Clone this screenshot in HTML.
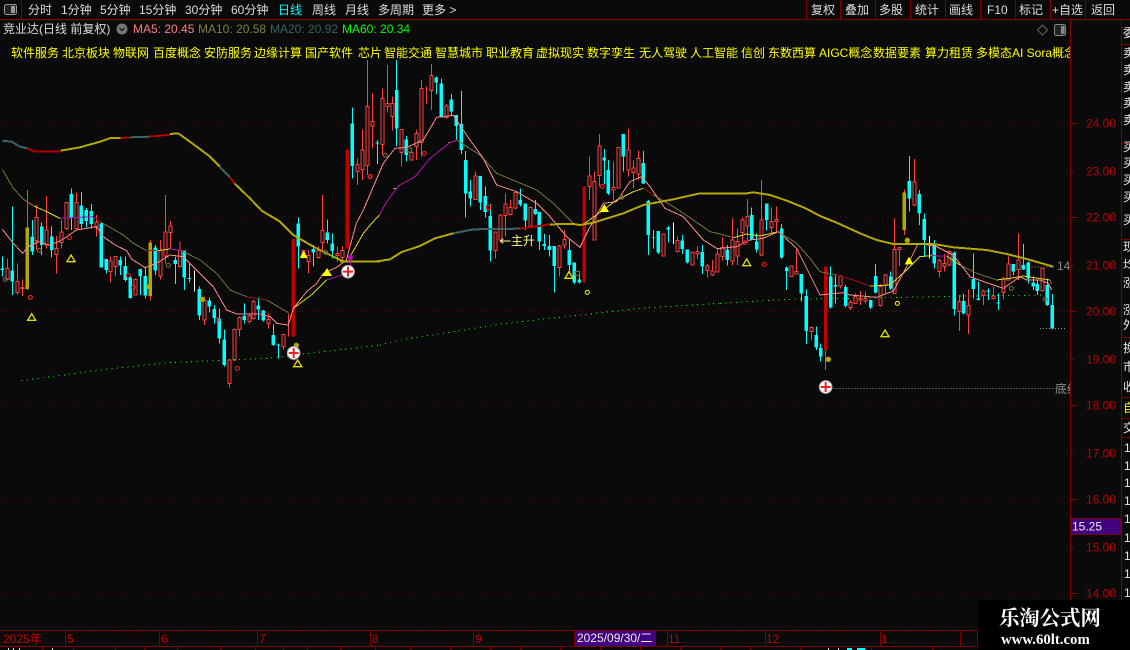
<!DOCTYPE html>
<html><head><meta charset="utf-8"><style>
html,body{margin:0;padding:0;background:#0a0a0a;overflow:hidden}
svg{display:block}
text{font-family:"Liberation Sans","WenQuanYi Zen Hei","Noto Sans CJK SC",sans-serif;font-size:12px}
.w{fill:#ddd}.t{fill:#ff0;font-size:12px}.a{fill:#c00000;font-size:12px}.s{fill:#e8e8e8;font-size:12px}.d{fill:#c00000;font-size:12px}
.rw{fill:none;stroke:#ff4040;stroke-width:3}.rb{fill:#0a0a0a;stroke:#ff4040;stroke-width:3}
.cw{fill:none;stroke:#0ff;stroke-width:3}.cb{fill:none;stroke:#0ff;stroke-width:10}
.m5{fill:none;stroke:#ff8a8a;stroke-width:3}.m10{fill:none;stroke:#77753c;stroke-width:3}.my{fill:none;stroke:#d8d820;stroke-width:3}.mm{fill:none;stroke:#b010b0;stroke-width:3}.mr{fill:none;stroke:#a01010;stroke-width:3}
.g{fill:none;stroke:#b3a800;stroke-width:6}.gt{fill:none;stroke:#3a6468;stroke-width:6}.gr{fill:none;stroke:#b00000;stroke-width:6}
.dots{fill:none;stroke:#0f0;stroke-width:3;stroke-dasharray:3 13}
.tk{stroke:#c00000;stroke-width:11;fill:none}.gd{stroke:#b3a800;stroke-width:11;fill:none}
.hr{fill:none;stroke:#ff2020;stroke-width:3}.ho{fill:none;stroke:#77753c;stroke-width:3}.hy{fill:none;stroke:#ff0;stroke-width:3}
.tri{fill:none;stroke:#e0e000;stroke-width:4}.trf{fill:#ff0}.dot{fill:#b3a800}
.pb{fill:#fff;stroke:#aaa;stroke-width:3}.pl{stroke:#f02020;stroke-width:6;fill:none}
.gl{stroke:#5e1010;stroke-width:1;stroke-dasharray:1 5;fill:none}
.ln{stroke:#800000;stroke-width:1;fill:none}
</style></head><body>
<svg width="1130" height="650" viewBox="0 0 1130 650" xmlns="http://www.w3.org/2000/svg">
<rect width="1130" height="650" fill="#0a0a0a"/>
<g shape-rendering="crispEdges">
<path class="gl" d="M0 123.5H1070M0 217.5H1070M0 311.5H1070M0 405.5H1070M0 499.5H1070M0 593.5H1070"/>
<path class="ln" d="M0 19.5H1130M1070.5 19V630M1121.5 20V600M21.5 0V19M806.5 0V19M840.5 0V19M875.5 0V19M910.5 0V19M945.500 0V19M980.5 0V19M1015.5 0V19M1050.5 0V19M1085.5 0V19"/>
<path class="ln" d="M0 630.5H1070M0 646.5H978M65.5 630V646M159.5 630V646M257.5 630V646M370.5 630V646M473.5 630V646M574.5 630V646M655.5 630V646M667.5 630V646M765.5 630V646M880.5 630V646"/>
<path class="ln" d="M89.5 630V633M112.5 630V633M136.5 630V633M183.5 630V633M210.5 630V633M234.5 630V633M277.5 630V633M300.5 630V633M323.5 630V633M396.5 630V633M421.5 630V633M446.5 630V633M498.5 630V633M528.5 630V633M554.5 630V633M692.5 630V633M715.5 630V633M741.5 630V633M792.5 630V633M817.5 630V633M842.5 630V633M905.5 630V633M930.5 630V633M955.5 630V633"/>
<path class="ln" d="M42.5 646V650M73.5 646V650M115.5 646V650M144.5 646V650M177.5 646V650M220.5 646V650M255.5 646V650M283.5 646V650M307.5 646V650M340.5 646V650M375.5 646V650M410.5 646V650M450.5 646V650M490.5 646V650M520.5 646V650M560.5 646V650M600.5 646V650M640.5 646V650M680.5 646V650M720.5 646V650M750.5 646V650M800.5 646V650M871.5 646V650M932.5 646V650"/>
<path class="ln" d="M1070 123.5H1077M1070 171.5H1074M1070 217.5H1077M1070 265.5H1074M1070 311.5H1077M1070 359.5H1074M1070 405.5H1077M1070 453.5H1074M1070 499.5H1077M1070 547.5H1074M1070 593.5H1077"/>
<path class="ln" d="M1121 27.5H1130M1121 44.5H1130M1121 143.5H1130M1121 239.5H1130M1121 337.5H1130M1121 397.5H1130M1121 418.5H1130M1121 437.5H1130"/>
<path d="M8 648h1v2h-1zM13 648h1v2h-1zM19 648h1v2h-1zM52 648h1v2h-1zM828 648h1v2h-1zM838 648h1v2h-1z" fill="#ddd"/>
<path d="M847 648h5v2h-5zM857 648h8v2h-8z" fill="#0ff"/>
</g>
<rect x="4.5" y="4.5" width="12" height="10" rx="2" fill="#222" stroke="#999" stroke-width="1"/><rect x="11" y="6" width="4" height="7" fill="#999"/>
<g>
<text x="28" y="14" class="w">分时</text><text x="61" y="14" class="w">1分钟</text><text x="100" y="14" class="w">5分钟</text><text x="139" y="14" class="w">15分钟</text><text x="185" y="14" class="w">30分钟</text><text x="231" y="14" class="w">60分钟</text><text x="278" y="14" fill="#0ff">日线</text><text x="312" y="14" class="w">周线</text><text x="345" y="14" class="w">月线</text><text x="378" y="14" class="w">多周期</text><text x="422" y="14" class="w">更多 &gt;</text>
<text x="811" y="14" class="w">复权</text><text x="845" y="14" class="w">叠加</text><text x="879" y="14" class="w">多股</text><text x="915" y="14" class="w">统计</text><text x="949" y="14" class="w">画线</text><text x="987" y="14" class="w">F10</text><text x="1019" y="14" class="w">标记</text><text x="1052" y="14" class="w">+自选</text><text x="1091" y="14" class="w">返回</text>
<text x="3" y="33" class="w">竞业达(日线 前复权)</text>
<circle cx="122" cy="29" r="5.5" fill="#777"/><path d="M119.5 28l2.5 2.5 2.5-2.5" fill="none" stroke="#111" stroke-width="1.2"/>
<text x="133" y="33" fill="#ff8080">MA5: 20.45</text><text x="198" y="33" fill="#808040">MA10: 20.58</text><text x="270" y="33" fill="#346468">MA20: 20.92</text><text x="342" y="33" fill="#0f0">MA60: 20.34</text>
<path d="M1042.5 25l5 5-5 5-5-5z" fill="none" stroke="#666"/><rect x="1054.5" y="24.5" width="11" height="11" rx="2" fill="#222" stroke="#888"/><rect x="1061" y="26" width="3.5" height="8" fill="#888"/>
<text x="11" y="57" class="t">软件服务</text><text x="62" y="57" class="t">北京板块</text><text x="113" y="57" class="t">物联网</text><text x="153" y="57" class="t">百度概念</text><text x="204" y="57" class="t">安防服务</text><text x="254" y="57" class="t">边缘计算</text><text x="305" y="57" class="t">国产软件</text><text x="358" y="57" class="t">芯片</text><text x="384" y="57" class="t">智能交通</text><text x="435" y="57" class="t">智慧城市</text><text x="486" y="57" class="t">职业教育</text><text x="536" y="57" class="t">虚拟现实</text><text x="587" y="57" class="t">数字孪生</text><text x="639" y="57" class="t">无人驾驶</text><text x="690" y="57" class="t">人工智能</text><text x="741" y="57" class="t">信创</text><text x="768" y="57" class="t">东数西算</text><text x="819" y="57" class="t">AIGC概念</text><text x="873" y="57" class="t">数据要素</text><text x="925" y="57" class="t">算力租赁</text>
<svg x="0" y="40" width="1070" height="24"><text x="976" y="17" class="t">多模态AI Sora概念</text></svg>
</g>
<g shape-rendering="crispEdges">
<g transform="translate(0,60) scale(.33333)">
<path class="rw" d="M22 595V660M52 610V705M67 658V708M82 390V690M110 435V570M140 408V565M170 528V640M185 480V565M200 427V510M229 397V510M289 465V530M332 590V668M347 588V650M406 655V707M451 540V722M481 540V658M496 405V610M511 483V565M540 545V622M613 710V795M688 897V983M703 805V903M718 770V830M748 760V790M760 720V778M805 760V805M850 822V870M865 760V830M910 570V595M925 570V640M955 560V595M967 405V575M1012 560V605M1027 558V600M1072 295V375M1087 208V360M1102 0V345M1117 100V266"/>
<path class="rb" d="M22 625m-4.500 0h9V658h-9zM52 665m-4.500 0h9V698h-9zM67 682m-4.500 0h9V685h-9zM110 472m-4.500 0h9V542h-9zM140 510m-4.500 0h9V555h-9zM170 565m-4.500 0h9V583h-9zM185 516m-4.500 0h9V548h-9zM200 427m-4.500 0h9V505h-9zM229 427m-4.500 0h9V505h-9zM289 487m-4.500 0h9V500h-9zM332 603m-4.500 0h9V635h-9zM347 590m-4.500 0h9V620h-9zM406 658m-4.500 0h9V705h-9zM481 572m-4.500 0h9V648h-9zM496 516m-4.500 0h9V588h-9zM511 498m-4.500 0h9V518h-9zM540 572m-4.500 0h9V620h-9zM613 722m-4.500 0h9V780h-9zM688 900m-4.500 0h9V970h-9zM703 808m-4.500 0h9V900h-9zM718 772m-4.500 0h9V808h-9zM748 768m-4.500 0h9V785h-9zM760 724m-4.500 0h9V775h-9zM805 778m-4.500 0h9V790h-9zM850 823m-4.500 0h9V860h-9zM910 572m-4.500 0h9V590h-9zM925 587m-4.500 0h9V605h-9zM955 572m-4.500 0h9V593h-9zM967 512m-4.500 0h9V548h-9zM1012 580m-4.500 0h9V587h-9zM1027 572m-4.500 0h9V592h-9zM1072 313m-4.500 0h9V334h-9zM1087 270m-4.500 0h9V328h-9zM1102 140m-4.500 0h9V316h-9zM1117 184m-4.500 0h9V198h-9z"/>
<path class="cw" d="M7 590V650M37 440V705M97 480V585M125 487V585M155 500V593M214 385V510M244 396V505M259 444V503M274 432V505M304 487V623M319 597V640M361 590V645M376 590V665M391 650V716M421 627V705M436 620V715M466 555V645M526 590V672M553 572V690M568 612V668M598 680V780M628 712V758M643 735V790M658 745V850M673 808V920M733 730V790M775 712V780M790 750V785M820 793V858M835 850V895M895 472V625M940 555V620M982 478V550M997 520V595M1057 142V355M1132 240V312"/>
<path class="cb" d="M7 625V630M37 632V665M97 530V575M125 500V555M155 530V570M214 402V472M244 437V492M259 450V483M274 453V492M304 490V623M319 597V630M361 600V617M376 618V660M391 652V714M421 627V648M436 648V706M466 562V632M526 600V612M553 572V653M568 654V657M598 687V767M628 722V740M643 747V774M658 775V835M673 838V915M733 768V780M775 736V748M790 752V782M820 825V855M835 853V856M895 490V560M940 567V578M982 517V540M997 550V573M1057 190V318M1132 247V250"/>
<path d="M583 632V695" stroke="#fff" stroke-width="3" fill="none"/>
<path class="gd" d="M82 503V687M451 548V708"/><path class="tk" d="M880 537V830M1042 268V565"/>
<path class="m10" d="M7 328L40 385 75 422 100 435M300 485L370 525 400 550 440 572M545 572L600 600 650 640 690 690 740 710M800 720L865 758"/>
<path class="mr" d="M82 430L100 437M280 470L300 485M440 572L470 572M740 710L800 720"/>
<path class="my" d="M100 437L140 455 180 475M470 572L510 567M880 745L940 700 980 660"/>
<path class="mm" d="M180 475L280 470M510 567L545 572M980 660L1040 640"/>
<path class="m5" d="M7 508L40 550 68 580 85 560 115 545 150 556 185 540 230 510 290 500 310 530 345 555 380 572 395 597 435 623 470 610 510 585 550 590 590 630 640 680 680 750 710 762 780 762 810 770 830 790 865 795 880 745 920 695 950 670 970 640 1010 622 1040 600"/>
<path class="gt" d="M7 242L35 245 60 260 82 265M390 232L450 230"/>
<path class="gr" d="M82 265L105 275 182 275M362 234L390 232M450 230L510 224"/>
<path class="g" d="M182 272L240 262 300 245 332 234 362 234M510 222L535 220 590 260 630 290 660 320"/>
<path class="gt" d="M660 322L690 352"/><path class="gr" d="M690 352L703 370"/>
<path class="g" d="M703 370L750 415 785 452 840 485 880 525 940 560 1000 590 1030 604 1140 604"/>
<path class="dots" d="M65 962L300 930 500 908 800 895 1140 855"/>
</g>
<g transform="translate(340,60) scale(.33333)">
<path class="rw" d="M127 85V285M142 15V157M157 110V212M184 208V320M214 270V302M229 208V300M244 60V290M259 80V130M274 12V150M319 132V175M406 335V420M466 515V595M481 462V548M496 400V530M511 420V466M526 396V448M571 440V500M658 555V650M673 510V565M748 290V420M763 335V540M778 222V380M820 305V422M835 262V385M865 205V350M880 300V385M895 272V358M970 520V590M1012 530V577M1057 575V617M1072 560V597M1102 612V652M1117 600V648M1132 565V638"/>
<path class="rb" d="M127 115m-4.500 0h9V253h-9zM142 130m-4.500 0h9V140h-9zM157 130m-4.500 0h9V170h-9zM184 208m-4.500 0h9V278h-9zM214 278m-4.500 0h9V300h-9zM229 220m-4.500 0h9V260h-9zM244 85m-4.500 0h9V248h-9zM274 46m-4.500 0h9V92h-9zM319 138m-4.500 0h9V172h-9zM406 348m-4.500 0h9V418h-9zM466 516m-4.500 0h9V572h-9zM481 465m-4.500 0h9V540h-9zM496 432m-4.500 0h9V466h-9zM511 442m-4.500 0h9V464h-9zM526 398m-4.500 0h9V444h-9zM571 442m-4.500 0h9V498h-9zM658 558m-4.500 0h9V622h-9zM673 538m-4.500 0h9V555h-9zM748 348m-4.500 0h9V380h-9zM763 364m-4.500 0h9V540h-9zM778 258m-4.500 0h9V347h-9zM820 382m-4.500 0h9V390h-9zM835 262m-4.500 0h9V384h-9zM865 270m-4.500 0h9V330h-9zM880 324m-4.500 0h9V338h-9zM895 295m-4.500 0h9V342h-9zM970 522m-4.500 0h9V588h-9zM1012 541m-4.500 0h9V575h-9zM1057 578m-4.500 0h9V615h-9zM1072 574m-4.500 0h9V582h-9zM1102 618m-4.500 0h9V632h-9zM1117 633m-4.500 0h9V645h-9zM1132 582m-4.500 0h9V636h-9z"/>
<path class="cw" d="M170 0V258M199 228V305M289 50V102M304 55V173M334 102V168M349 165V240M364 93V282M377 273V472M391 360V440M421 348V450M436 380V472M451 432V605M541 385V440M556 430V510M586 420V465M598 455V570M613 522V570M628 525V590M643 558V698M688 538V640M703 608V672M718 640V670M793 267V372M805 300V405M850 222V335M910 273V372M925 420V585M940 510V565M955 513V582M985 498V548M1027 525V582M1042 568V610M1087 555V642"/>
<path class="cb" d="M170 90V205M199 238V285M289 52V68M304 70V172M334 118V155M349 165V198M364 192V270M377 300V400M391 395V416M421 348V428M436 408V456M451 468V572M541 420V433M556 430V482M586 447V462M598 456V545M613 552V558M628 558V570M643 558V618M688 570V615M703 608V668M718 658V668M793 292V302M805 330V400M850 222V290M910 309V370M925 423V525M940 532V534M955 513V578M985 503V508M1027 541V567M1042 568V608M1087 576V620"/>
<path d="M1000 487V552" stroke="#fff" stroke-width="3" fill="none"/>
<path class="tk" d="M733 380V668"/>
<path class="m10" d="M350 240L420 285 470 340 530 365 590 390 640 430 700 490M940 405L1000 440 1060 480 1110 515 1140 522"/>
<path class="my" d="M30 590L70 520 95 490 118 465M730 493L790 450 830 420 880 395 910 385M325 248L335 248M160 385L170 385"/>
<path class="mm" d="M118 465L140 425 175 378 225 350 270 295 330 248 350 240"/>
<path class="mr" d="M910 385L940 405"/>
<path class="m5" d="M19 600L49 490 70 450 100 380 130 310 165 265 200 262 250 240 290 172 340 166 390 240 430 295 470 375 530 395 590 430 630 470 680 530 720 562 745 510 790 430 830 425 870 365 905 350 930 380 975 445 1030 470 1090 540 1130 565 1145 567"/>
<path class="g" d="M0 605L112 604 150 598 185 576 240 558 285 535 340 520"/>
<path class="gt" d="M340 520L400 508 540 506"/><path class="gr" d="M540 506L630 493"/>
<path class="g" d="M630 493L700 492 720 495 760 488 850 460 910 435 1000 418 1075 401 1140 401"/>
<path class="dots" d="M120 855L180 840 500 790 900 745 1140 730"/>
</g>
<g transform="translate(720,130) scale(.33333)">
<path class="rw" d="M7 323V392M37 265V407M52 295V405M67 262V340M82 207V330M125 150V378M155 232V310M170 230V308M215 408V441M229 355V434M274 590V632M317 600V720M362 435V475M392 510V540M407 490V522M422 483V525M437 485V520M482 462V530M497 432V490M523 265V490M538 352V408M553 178V315M583 87V228M658 385V443M673 372V425M688 362V408M718 495V603M746 478V612M790 478V525M820 470V508M850 440V508M865 380V452M895 310V450M967 415V484"/>
<path class="rb" d="M7 352m-4.500 0h9V380h-9zM37 330m-4.500 0h9V393h-9zM52 334m-4.500 0h9V378h-9zM67 270m-4.500 0h9V308h-9zM82 260m-4.500 0h9V288h-9zM125 270m-4.500 0h9V375h-9zM155 274m-4.500 0h9V293h-9zM170 268m-4.500 0h9V275h-9zM215 408m-4.500 0h9V440h-9zM229 424m-4.500 0h9V432h-9zM274 593m-4.500 0h9V605h-9zM362 438m-4.500 0h9V468h-9zM392 517m-4.500 0h9V533h-9zM407 500m-4.500 0h9V520h-9zM422 505m-4.500 0h9V510h-9zM437 505m-4.500 0h9V513h-9zM482 470m-4.500 0h9V527h-9zM497 435m-4.500 0h9V467h-9zM523 358m-4.500 0h9V490h-9zM538 352m-4.500 0h9V358h-9zM583 156m-4.500 0h9V225h-9zM658 392m-4.500 0h9V425h-9zM673 400m-4.500 0h9V410h-9zM688 365m-4.500 0h9V405h-9zM718 515m-4.500 0h9V545h-9zM746 527m-4.500 0h9V555h-9zM790 483m-4.500 0h9V497h-9zM820 498m-4.500 0h9V506h-9zM850 445m-4.500 0h9V488h-9zM865 402m-4.500 0h9V450h-9zM895 390m-4.500 0h9V418h-9zM967 415m-4.500 0h9V482h-9z"/>
<path class="cw" d="M22 345V407M95 232V332M110 310V367M140 220V302M185 282V387M200 410V480M244 432V515M259 478V642M289 590V660M302 640V695M332 410V535M347 437V520M377 465V532M452 510V537M467 402V490M512 425V480M568 78V245M598 180V285M613 250V378M643 330V415M703 365V557M731 490V553M760 370V505M775 455V512M805 475V510M835 490V540M880 402V435M910 342V420M925 395V460M940 440V480M952 450V495M982 445V528M997 492V598"/>
<path class="cb" d="M22 358V390M95 255V330M110 335V358M140 220V270M185 295V383M200 412V423M244 432V490M259 498V603M289 615V653M302 654V680M332 440V533M347 465V470M377 471V528M452 510V532M467 438V487M512 440V475M568 153V205M598 192V250M613 267V330M643 345V400M703 367V537M731 513V550M760 447V477M775 505V510M805 482V485M835 517V520M880 402V425M910 405V418M925 398V445M940 458V470M952 462V483M982 465V525M997 525V595"/>
<path d="M628 318V385" stroke="#fff" stroke-width="3" fill="none"/>
<path class="gd" d="M553 187V300"/><path class="tk" d="M317 410V662"/>
<path class="m10" d="M0 312L40 323M175 305L230 340 270 385 300 425 350 435M720 405L770 430 830 450M990 450L995 462"/>
<path class="mr" d="M350 435L400 450 450 468"/>
<path class="my" d="M40 323L80 312 120 318 175 305M450 468L510 465 560 420 600 380 635 377M680 378L720 405M830 450L870 445 910 438 990 450"/>
<path class="mm" d="M635 377L680 378"/>
<path class="m5" d="M0 355L50 350 90 330 130 325 175 305 230 355 300 495 370 488 390 495 470 502 520 483 560 410 595 340 650 350 700 375 750 440 800 458 850 475 900 440 920 450 960 450 985 460 995 480"/>
<path class="g" d="M0 190L80 190 100 187 150 195 200 212 250 232 305 260 350 278 420 310 470 330 520 342 640 342 700 352 800 360 860 372 920 387 1000 410"/>
<path class="dots" d="M0 520L200 508 500 503 800 497 990 495"/>
<path d="M925 411H1005M960 595H1035M340 775H1050" fill="none" stroke="#999" stroke-width="3" stroke-dasharray="3 6"/>
</g>
</g>
<g transform="translate(0,60) scale(.33333)">
<path class="hr" d="M91 712m-6 0a6 6 0 1 0 12 0a6 6 0 1 0-12 0M208 533m-6 0a6 6 0 1 0 12 0a6 6 0 1 0-12 0M385 646m-6 0a6 6 0 1 0 12 0a6 6 0 1 0-12 0M400 682m-6 0a6 6 0 1 0 12 0a6 6 0 1 0-12 0M652 779m-6 0a6 6 0 1 0 12 0a6 6 0 1 0-12 0M712 925m-6 0a6 6 0 1 0 12 0a6 6 0 1 0-12 0M1110 350m-6 0a6 6 0 1 0 12 0a6 6 0 1 0-12 0"/>
<path class="ho" d="M16 658m-6 0a6 6 0 1 0 12 0a6 6 0 1 0-12 0M118 571m-6 0a6 6 0 1 0 12 0a6 6 0 1 0-12 0M505 616m-6 0a6 6 0 1 0 12 0a6 6 0 1 0-12 0M977 577m-6 0a6 6 0 1 0 12 0a6 6 0 1 0-12 0"/>
<path class="tri" d="M95 761l12 20h-24zM213 585l12 20h-24zM893 900l12 20h-24z"/>
<path class="trf" d="M911 572l12 22h-24zM981 624l15 24h-30z"/>
<circle class="dot" cx="445" cy="680" r="7"/><circle class="dot" cx="607" cy="718" r="8"/><circle class="dot" cx="889" cy="856" r="8"/>
<path d="M1051 600V620" stroke="#b010b0" stroke-width="3"/><circle cx="1051" cy="593" r="8" fill="#b010b0"/>
<circle class="pb" cx="881" cy="879" r="19"/><path class="pl" d="M866 879H896M881 864V894"/>
<circle class="pb" cx="1044" cy="635" r="19"/><path class="pl" d="M1029 635H1059M1044 620V650"/>
</g>
<g transform="translate(340,60) scale(.33333)">
<path class="hr" d="M91 349m-6 0a6 6 0 1 0 12 0a6 6 0 1 0-12 0M253 280m-6 0a6 6 0 1 0 12 0a6 6 0 1 0-12 0M787 379m-6 0a6 6 0 1 0 12 0a6 6 0 1 0-12 0M439 437h13v11h-13z"/>
<path class="ho" d="M136 286m-6 0a6 6 0 1 0 12 0a6 6 0 1 0-12 0M201 264h14v12h-14zM705 634h14v12h-14zM845 412m-6 0a6 6 0 1 0 12 0a6 6 0 1 0-12 0"/>
<circle cx="742" cy="697" r="6" fill="none" stroke="#ff0" stroke-width="3"/>
<path class="tri" d="M687 635l12 20h-24z"/><path class="trf" d="M793 432l14 24h-28z"/>
<path d="M480 543H512M490 536l-8 7 8 7" fill="none" stroke="#ffffa0" stroke-width="3"/>
</g>
<text x="511" y="245" fill="#ffff80">主升</text>
<g transform="translate(720,130) scale(.33333)">
<path class="hr" d="M75 338m-6 0a6 6 0 1 0 12 0a6 6 0 1 0-12 0M133 403m-6 0a6 6 0 1 0 12 0a6 6 0 1 0-12 0"/>
<path class="ho" d="M874 475m-6 0a6 6 0 1 0 12 0a6 6 0 1 0-12 0M976 508m-6 0a6 6 0 1 0 12 0a6 6 0 1 0-12 0"/>
<circle cx="532" cy="520" r="6" fill="none" stroke="#ff0" stroke-width="3"/>
<path class="tri" d="M80 387l12 20h-24zM495 600l12 20h-24z"/><path class="trf" d="M567 380l13 23h-26z"/>
<circle class="dot" cx="562" cy="331" r="8"/><circle class="dot" cx="325" cy="688" r="8"/>
<circle class="pb" cx="317" cy="771" r="19"/><path class="pl" d="M302 771H332M317 756V786"/>
</g>
<text x="1057" y="270" fill="#888">14</text>
<svg x="1055" y="380" width="15" height="16"><text x="0" y="13" fill="#888">底线</text></svg>
<g>
<text x="1086" y="127.500" class="a">24.00</text><text x="1086" y="175.500" class="a">23.00</text><text x="1086" y="221.500" class="a">22.00</text><text x="1086" y="269.500" class="a">21.00</text><text x="1086" y="315.500" class="a">20.00</text><text x="1086" y="363.500" class="a">19.00</text><text x="1086" y="409.500" class="a">18.00</text><text x="1086" y="457.500" class="a">17.00</text><text x="1086" y="503.500" class="a">16.00</text><text x="1086" y="551.500" class="a">15.00</text><text x="1086" y="597.500" class="a">14.00</text>
<rect x="1071" y="518.500" width="50" height="16" fill="#400080" stroke="#800000"/><text x="1072" y="530.500" fill="#eee">15.25</text>
<text x="1123" y="37" class="s">委</text><text x="1123" y="57" class="s">卖</text><text x="1123" y="74" class="s">卖</text><text x="1123" y="91" class="s">卖</text><text x="1123" y="107" class="s">卖</text><text x="1123" y="124" class="s">卖</text><text x="1123" y="151" class="s">买</text><text x="1123" y="167" class="s">买</text><text x="1123" y="184" class="s">买</text><text x="1123" y="201" class="s">买</text><text x="1123" y="224" class="s">买</text><text x="1123" y="251" class="s">现</text><text x="1123" y="269" class="s">均</text><text x="1123" y="287" class="s">涨</text><text x="1123" y="314" class="s">涨</text><text x="1123" y="329" class="s">外</text><text x="1123" y="352" class="s">换</text><text x="1123" y="371" class="s">市</text><text x="1123" y="391" class="s">收</text><text x="1123" y="412" fill="#ff0">自</text><text x="1123" y="432" class="s">交</text>
<text x="1124" y="452" class="s">1</text><text x="1124" y="470" class="s">1</text><text x="1124" y="487" class="s">1</text><text x="1124" y="505" class="s">1</text><text x="1124" y="523" class="s">1</text><text x="1124" y="542" class="s">1</text><text x="1124" y="560" class="s">1</text><text x="1124" y="578" class="s">1</text><text x="1124" y="597" class="s">1</text>
<text x="3" y="643" class="d">2025年</text><text x="67" y="643" class="d">5</text><text x="161" y="643" class="d">6</text><text x="259" y="643" class="d">7</text><text x="372" y="643" class="d">8</text><text x="475" y="643" class="d">9</text><text x="668" y="643" class="d">11</text><text x="766" y="643" class="d">12</text><text x="881" y="643" class="d">1</text>
<rect x="575" y="631" width="80" height="15" fill="#400080"/><text x="577" y="642" fill="#eee">2025/09/30/二</text>
</g>
<rect x="978" y="600" width="152" height="50" fill="#000"/>
<rect x="960.500" y="630.500" width="17" height="16" fill="#0a0a0a" stroke="#800000"/>
<text x="999" y="625" fill="#fff" style="font-size:20.400px;font-weight:bold;font-family:'Liberation Sans','Noto Serif CJK SC',serif">乐淘公式网</text>
<text x="1001" y="644" fill="#fff" style="font-size:14.800px;font-weight:bold;font-family:'Liberation Serif',serif">www.60lt.com</text>
</svg>
</body></html>
